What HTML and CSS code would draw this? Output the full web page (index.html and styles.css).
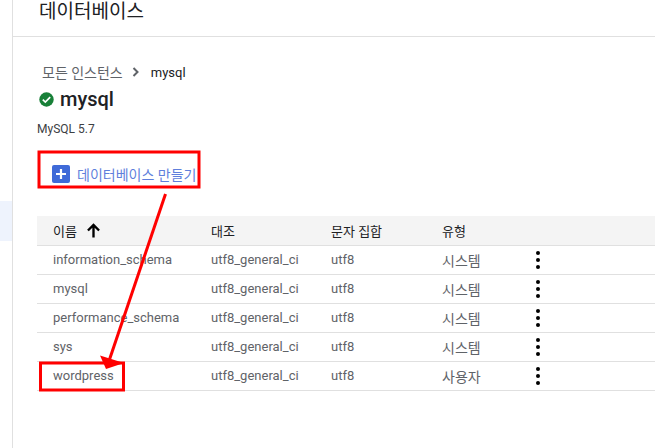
FILE: index.html
```html
<!DOCTYPE html>
<html lang="ko">
<head>
<meta charset="utf-8">
<title>데이터베이스</title>
<link rel="stylesheet" href="styles.css">
</head>
<body>
<div class="app">
  <aside class="rail"><div class="rail-active"></div></aside>
  <main class="main">
    <header class="topbar"><h1 class="page-title">데이터베이스</h1></header>
    <section class="content">
      <nav class="crumbs">
        <span class="crumb-link">모든 인스턴스</span>
        <svg class="crumb-sep" width="8" height="10" viewBox="0 0 8 10"><path d="M1.500 1 5.500 5 1.500 9" fill="none" stroke="#5f6368" stroke-width="2"/></svg>
        <span class="crumb-current">mysql</span>
      </nav>
      <div class="title-row">
        <svg class="status" width="15" height="15" viewBox="0 0 15 15"><circle cx="7.5" cy="7.5" r="7.2" fill="#188038"/><path d="M3.8 7.7 6.3 10.1 11.2 5.2" fill="none" stroke="#fff" stroke-width="1.7"/></svg>
        <h2 class="instance">mysql</h2>
      </div>
      <p class="version">MySQL 5.7</p>
      <div class="action">
        <span class="plus"><svg width="18" height="18" viewBox="0 0 18 18"><path d="M9 4v10M4 9h10" stroke="#fff" stroke-width="2.2"/></svg></span>
        <span class="action-label">데이터베이스 만들기</span>
      </div>
      <table class="table">
        <thead>
          <tr><th class="c1"><span class="sort">이름<svg width="15" height="15" viewBox="0 0 14 14"><path d="M7 13.500V2M1.800 7 7 1.800 12.200 7" fill="none" stroke="#000" stroke-width="2.200"/></svg></span></th><th class="c2">대조</th><th class="c3">문자 집합</th><th class="c4">유형</th><th></th></tr>
        </thead>
        <tbody>
          <tr><td>information_schema</td><td>utf8_general_ci</td><td>utf8</td><td class="kind">시스템</td><td><span class="more"><i></i><i></i><i></i></span></td></tr>
          <tr><td>mysql</td><td>utf8_general_ci</td><td>utf8</td><td class="kind">시스템</td><td><span class="more"><i></i><i></i><i></i></span></td></tr>
          <tr><td>performance_schema</td><td>utf8_general_ci</td><td>utf8</td><td class="kind">시스템</td><td><span class="more"><i></i><i></i><i></i></span></td></tr>
          <tr><td>sys</td><td>utf8_general_ci</td><td>utf8</td><td class="kind">시스템</td><td><span class="more"><i></i><i></i><i></i></span></td></tr>
          <tr><td>wordpress</td><td>utf8_general_ci</td><td>utf8</td><td class="kind">사용자</td><td><span class="more"><i></i><i></i><i></i></span></td></tr>
        </tbody>
      </table>
    </section>
  </main>
</div>
<svg class="markup" width="655" height="448" viewBox="0 0 655 448">
  <rect x="39" y="152" width="160" height="35" fill="none" stroke="#f00" stroke-width="3"/>
  <rect x="40.500" y="363" width="83" height="27" fill="none" stroke="#f00" stroke-width="3"/>
  <path d="M165.500 194 109 361" fill="none" stroke="#f00" stroke-width="3"/>
  <path d="M100 355.500 124 363 106 369Z" fill="#f00"/>
</svg>
</body>
</html>
```
FILE: styles.css
```css
* { box-sizing: border-box; }
html, body { margin: 0; height: 100%; overflow: hidden; background: #fff; }
body { font-family: Roboto, "Noto Sans CJK KR", sans-serif; color: #3c4043; }
.app { display: flex; height: 448px; }
.rail { width: 13px; flex: none; border-right: 1px solid #e0e0e0; padding-top: 201px; }
.rail-active { height: 40px; background: #eef3fd; }
.main { flex: 1; min-width: 0; }
.topbar { height: 37px; border-bottom: 1px solid #e0e0e0; padding: 1px 0 0 26px; }
.page-title { margin: 0; font-size: 19px; font-weight: 400; line-height: 22px; color: #202124; }
.content { padding: 27px 0 0 24px; }
.crumbs { display: flex; align-items: center; height: 16px; padding-left: 5px; font-size: 14px; }
.crumb-link { color: #5f6368; }
.crumb-sep { margin: 0 11px 0 9px; }
.crumb-current { color: #202124; font-size: 13px; }
.title-row { display: flex; align-items: center; margin-top: 7px; height: 24px; padding-left: 2px; }
.status { margin-right: 6px; }
.instance { margin: 0; font-size: 20px; font-weight: 500; color: #202124; line-height: 24px; }
.version { margin: 10px 0 0; font-size: 12px; line-height: 16px; color: #3c4043; }
.action { display: flex; align-items: center; margin-top: 28px; height: 18px; padding-left: 15px; }
.plus { display: flex; width: 18px; height: 18px; border-radius: 2px; background: #3f6ad8; margin-right: 7px; }
.action-label { font-size: 14px; color: #5f7fdc; }
.table { margin-top: 33px; width: 618px; border-collapse: collapse; table-layout: fixed; font-size: 13px; }
.table th { height: 29px; background: #f4f4f4; border-bottom: 1px solid #e0e0e0; text-align: left; font-weight: 400; color: #202124; font-size: 13px; padding: 0 0 0 16px; }
.table td { height: 29px; border-bottom: 1px solid #e0e0e0; padding: 0 0 0 16px; color: #5f6368; }
.table td.kind { font-size: 14px; }
.table .c1 { width: 158px; }
.table .c2 { width: 120px; }
.table .c3 { width: 111px; }
.table .c4 { width: 94px; }
.sort { display: inline-flex; align-items: center; gap: 9px; }
.more { display: inline-flex; flex-direction: column; gap: 3px; vertical-align: middle; padding-top: 1px; }
.more i { display: block; width: 4px; height: 4px; border-radius: 50%; background: #000; }
.markup { position: absolute; left: 0; top: 0; pointer-events: none; }
```
